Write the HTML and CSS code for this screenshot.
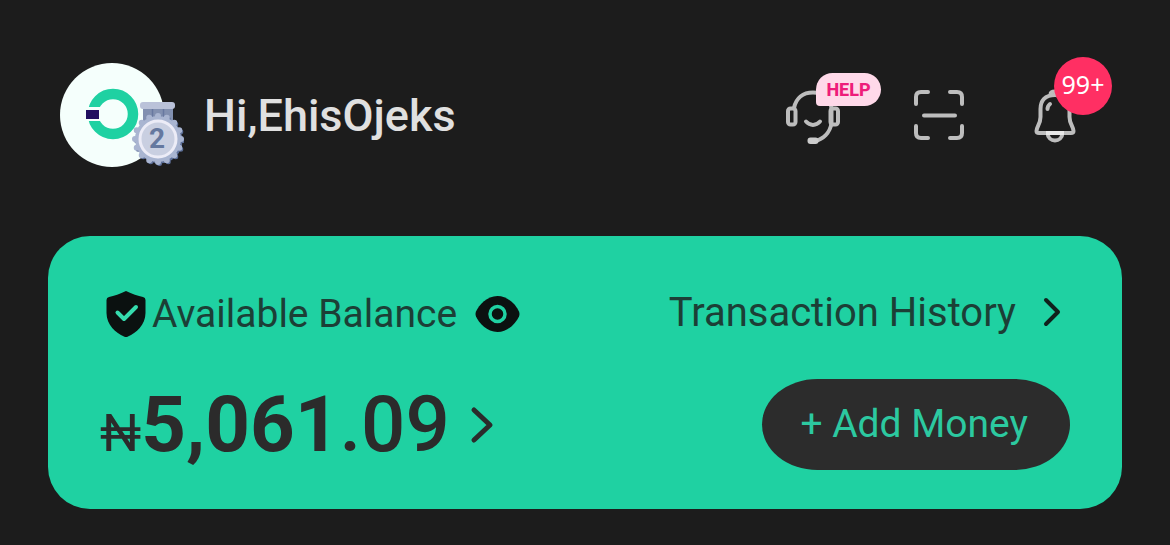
FILE: index.html
```html
<!DOCTYPE html>
<html lang="en">
<head>
<meta charset="utf-8">
<meta name="viewport" content="width=device-width, initial-scale=1">
<title>Wallet</title>
<link rel="stylesheet" href="styles.css">
</head>
<body>
<header class="header">
  <a class="profile" href="#profile">
    <svg class="avatar" viewBox="0 0 124 104" role="img" aria-label="Profile, level 2">
      <circle cx="52" cy="52" r="52" fill="#f5fffc"/>
      <circle cx="53" cy="51" r="20" fill="none" stroke="#1fd1a2" stroke-width="10.5"/>
      <path d="M25 44H41V58H25z" fill="#f5fffc"/>
      <path d="M26 47H39V56H26z" fill="#210f60"/>
      <path d="M83 44h30v14H83z" fill="#8290b0"/>
      <path d="M92.500 45v12M103.500 45v12" stroke="#6878a0" stroke-width="1.500"/>
      <rect x="80" y="39" width="35" height="7" rx="3" fill="#bac2d9"/>
      <circle cx="99.500" cy="77.500" r="23" fill="#5d6f98" stroke="#5d6f98" stroke-width="5" stroke-linecap="round" stroke-dasharray="0 1" pathLength="16"/>
      <circle cx="98" cy="76" r="23" fill="#a9b5d1" stroke="#a9b5d1" stroke-width="6" stroke-linecap="round" stroke-dasharray="0 1" pathLength="16"/>
      <circle cx="98" cy="76" r="18" fill="#c9cfe1" stroke="#ececf7" stroke-width="3"/>
      <text class="medal-number" x="97" y="85" text-anchor="middle">2</text>
    </svg>
    <span class="greeting">Hi,EhisOjeks</span>
  </a>
  <nav class="actions" aria-label="Quick actions">
    <button class="action" type="button" aria-label="Help">
      <svg class="icon" viewBox="0 0 60 60">
        <rect x="4" y="23.500" width="7.500" height="16" rx="2.500"/>
        <rect x="46.500" y="23.500" width="7.500" height="16" rx="2.500"/>
        <path d="M10 23C12 13 19 7.500 29 7.500S46 13 47.500 23V38C46 48 39 54 31 56"/>
        <path d="M22 36.500C26 41 32 41 36 36.500" stroke-linecap="round"/>
        <rect class="solid" x="23.500" y="52.500" width="11" height="6.500" rx="3"/>
      </svg>
      <span class="help-tag">HELP</span>
    </button>
    <button class="action" type="button" aria-label="Scan">
      <svg class="icon" viewBox="0 0 60 60" stroke-linecap="round">
        <path d="M8 19V12Q8 7 13 7H20M42 7H49Q54 7 54 12V19M54 41V48Q54 53 49 53H42M20 53H13Q8 53 8 48V41M16 30.500H47"/>
      </svg>
    </button>
    <button class="action" type="button" aria-label="Notifications">
      <svg class="icon icon-bell" viewBox="0 0 48 60">
        <path d="M18.500 9.500Q18.500 6.500 23 6.500T27.500 9.500" />
        <path d="M23 10C13 10 8.500 16 8.500 24V32C8.500 39 4.500 42 4.500 46Q4.500 48 7 48H39Q41.500 48 41.500 46C41.500 42 37.500 39 37.500 32V24C37.500 16 33 10 23 10z"/>
        <path d="M15.500 48C16 58 30 58 30.500 48z"/>
        <path d="M18 19Q15.500 21 15.500 24" stroke-linecap="round"/>
        <path d="M14 48H32" stroke="#e8e8e8"/>
      </svg>
      <span class="count-badge">99+</span>
    </button>
  </nav>
</header>
<main class="card">
  <div class="label">
    <svg class="shield" viewBox="0 0 40 46" aria-hidden="true">
      <path d="M20 0C26 3 32 5 37 6Q39.500 6.500 39.500 9V22C39.500 34 30 42 22 45.500Q20 46.500 18 45.500C10 42 .5 34 .5 22V9Q.5 6.500 3 6C8 5 14 3 20 0z" fill="#0b1110"/>
      <path d="M11.500 21.500L18 28L30 16" fill="none" stroke="#35dcae" stroke-width="4" stroke-linecap="round" stroke-linejoin="round"/>
    </svg>
    <span class="label-text">Available Balance</span>
    <button class="eye-button" type="button" aria-label="Hide balance">
      <svg class="eye" viewBox="0 0 45 36">
        <path d="M22.500 0C33 0 41 9 44 15.500Q45 18 44 20.500C41 27 33 36 22.500 36S4 27 1 20.500Q0 18 1 15.500C4 9 12 0 22.500 0z" fill="#0b1110"/>
        <circle cx="22.500" cy="18" r="7.500" fill="none" stroke="#1fd1a2" stroke-width="3.500"/>
      </svg>
    </button>
  </div>
  <a class="history" href="#history">
    <span>Transaction History</span>
    <svg class="chevron chevron-small" viewBox="0 0 20 32" aria-hidden="true"><path d="M4 4L16 16L4 28"/></svg>
  </a>
  <a class="balance" href="#balance">
    <span class="amount"><span class="currency">₦</span><span class="whole">5,061</span><span class="cents">.09</span></span>
    <svg class="chevron chevron-large" viewBox="0 0 24 38" aria-hidden="true"><path d="M4 4L20 19L4 34"/></svg>
  </a>
  <button class="add-money" type="button">+ Add Money</button>
</main>
</body>
</html>
```
FILE: styles.css
```css
* {
  box-sizing: border-box;
}

body {
  margin: 0;
  padding: 63px 48px 36px;
  background: #1c1c1c;
  color: #2b2b2b;
  font-family: Roboto, "Noto Sans", sans-serif;
}

a {
  color: inherit;
  text-decoration: none;
}

button {
  padding: 0;
  border: 0;
  background: none;
  font: inherit;
  cursor: pointer;
}

svg {
  display: block;
  flex: none;
}

.header {
  display: flex;
  align-items: center;
  justify-content: space-between;
  margin-bottom: 69px;
  padding: 0 42px 0 12px;
}

.profile {
  display: flex;
  align-items: center;
  gap: 20px;
}

.avatar {
  width: 124px;
  height: 104px;
}

.medal-number {
  fill: #65789f;
  font-size: 28px;
  font-weight: 700;
}

.greeting {
  color: #e0e0e0;
  font-size: 45px;
  font-weight: 500;
}

.actions {
  display: flex;
  gap: 64px;
}

.action {
  position: relative;
}

.icon {
  width: 60px;
  height: 60px;
  fill: none;
  stroke: #bdbdbd;
  stroke-width: 4px;
}

.icon-bell {
  width: 48px;
}

.solid {
  fill: #cccccc;
  stroke: none;
}

.help-tag {
  position: absolute;
  top: -12px;
  left: 32px;
  width: 65px;
  border-radius: 17px 17px 17px 4px;
  background: #ffd9e9;
  color: #ee1d7a;
  font-size: 18px;
  font-weight: 800;
  line-height: 33px;
  text-align: center;
}

.count-badge {
  position: absolute;
  top: -28px;
  left: 22px;
  width: 58px;
  padding-bottom: 4px;
  border-radius: 50%;
  background: #ff2f63;
  color: #ffffff;
  font-family: "Noto Sans", sans-serif;
  font-size: 25px;
  line-height: 54px;
  text-align: center;
}

.card {
  display: grid;
  grid-template-columns: 1fr auto;
  row-gap: 41px;
  padding: 54px 52px 39px;
  border-radius: 42px;
  background: #1fd1a2;
}

.label {
  display: flex;
  align-items: center;
  height: 48px;
  padding-left: 6px;
  font-size: 39px;
}

.shield {
  width: 40px;
  height: 46px;
}

.label-text {
  margin: 0 18px 0 6px;
  color: #1c3f36;
}

.eye {
  width: 45px;
  height: 36px;
}

.history {
  display: flex;
  align-items: center;
  justify-self: end;
  gap: 26px;
  height: 44px;
  padding-right: 8px;
  color: #1c3f36;
  font-size: 40px;
}

.chevron {
  fill: none;
  stroke: #2b2b2b;
  stroke-width: 5px;
  stroke-linecap: round;
  stroke-linejoin: round;
}

.chevron-small {
  width: 20px;
  height: 32px;
  stroke: #10211c;
  stroke-width: 4px;
}

.chevron-large {
  width: 24px;
  height: 38px;
}

.balance {
  display: flex;
  align-items: center;
  gap: 20px;
}

.amount {
  font-size: 78px;
  line-height: 90px;
}

.currency {
  font-size: 52px;
  line-height: 1;
}

.whole {
  font-weight: 700;
}

.cents {
  font-weight: 500;
}

.add-money {
  justify-self: end;
  padding: 0 42px 0 38px;
  border-radius: 56px / 46px;
  background: #2c2c2c;
  color: #2cc9a0;
  font-size: 39px;
  line-height: 91px;
}
```
